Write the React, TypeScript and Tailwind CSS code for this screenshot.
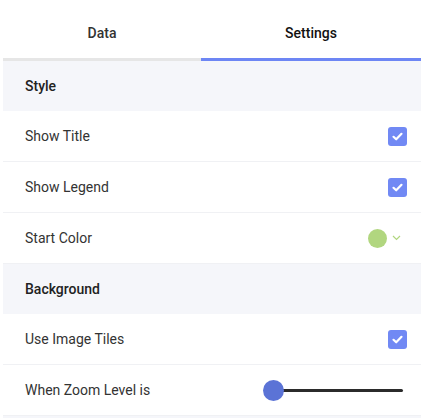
import React from "react";

function Check() {
  return (
    <div className="w-[19px] h-[19px] rounded-[3px] bg-[#7189f4] flex items-center justify-center">
      <svg width="13" height="13" viewBox="0 0 13 13" fill="none">
        <path d="M2.5 6.8 L5.2 9.3 L10.5 3.8" stroke="white" strokeWidth="2.2" strokeLinecap="round" strokeLinejoin="round" />
      </svg>
    </div>
  );
}

function Row({ label, children }: { label: string; children?: React.ReactNode }) {
  return (
    <div className="h-[51px] border-b border-[#f0f1f4] flex items-center justify-between pl-[22px] pr-[14px] bg-white">
      <span className="text-[14px] text-[#333]">{label}</span>
      {children}
    </div>
  );
}

function Header({ label }: { label: string }) {
  return (
    <div className="h-[50px] bg-[#f5f6fa] flex items-center pl-[22px]">
      <span className="text-[14px] font-medium text-[#222]">{label}</span>
    </div>
  );
}

export default function App() {
  return (
    <div className="w-[421px] h-[418px] bg-white overflow-hidden pl-[3px]" style={{ fontFamily: "Roboto, 'Liberation Sans', sans-serif" }}>
      <div className="flex h-[61px]">
        <div className="w-[198px] flex flex-col">
          <div className="flex-1 flex items-center justify-center pt-[8px] text-[14px] font-medium text-[#333]">Data</div>
          <div className="h-[3px] bg-[#e6e6e6]" />
        </div>
        <div className="flex-1 flex flex-col">
          <div className="flex-1 flex items-center justify-center pt-[8px] text-[14px] font-medium text-[#111]">Settings</div>
          <div className="h-[3px] bg-[#6d86f4]" />
        </div>
      </div>
      <Header label="Style" />
      <Row label="Show Title"><Check /></Row>
      <Row label="Show Legend"><Check /></Row>
      <Row label="Start Color">
        <div className="flex items-center gap-[5px] mr-[6px]">
          <div className="w-[19px] h-[19px] rounded-full bg-[#b1d67f]" />
          <svg width="9" height="6" viewBox="0 0 9 6" fill="none">
            <path d="M1 1 L4.5 4.5 L8 1" stroke="#b1d67f" strokeWidth="1.2" />
          </svg>
        </div>
      </Row>
      <Header label="Background" />
      <Row label="Use Image Tiles"><Check /></Row>
      <Row label="When Zoom Level is">
        <div className="relative w-[140px] h-[22px] flex items-center mr-[4px]">
          <div className="absolute left-[10px] right-0 h-[3px] bg-[#2b2b2b] rounded" />
          <div className="absolute left-0 w-[21px] h-[21px] rounded-full bg-[#5b73d6]" />
        </div>
      </Row>
      <div className="h-[10px] bg-[#f5f6fa]" />
    </div>
  );
}
